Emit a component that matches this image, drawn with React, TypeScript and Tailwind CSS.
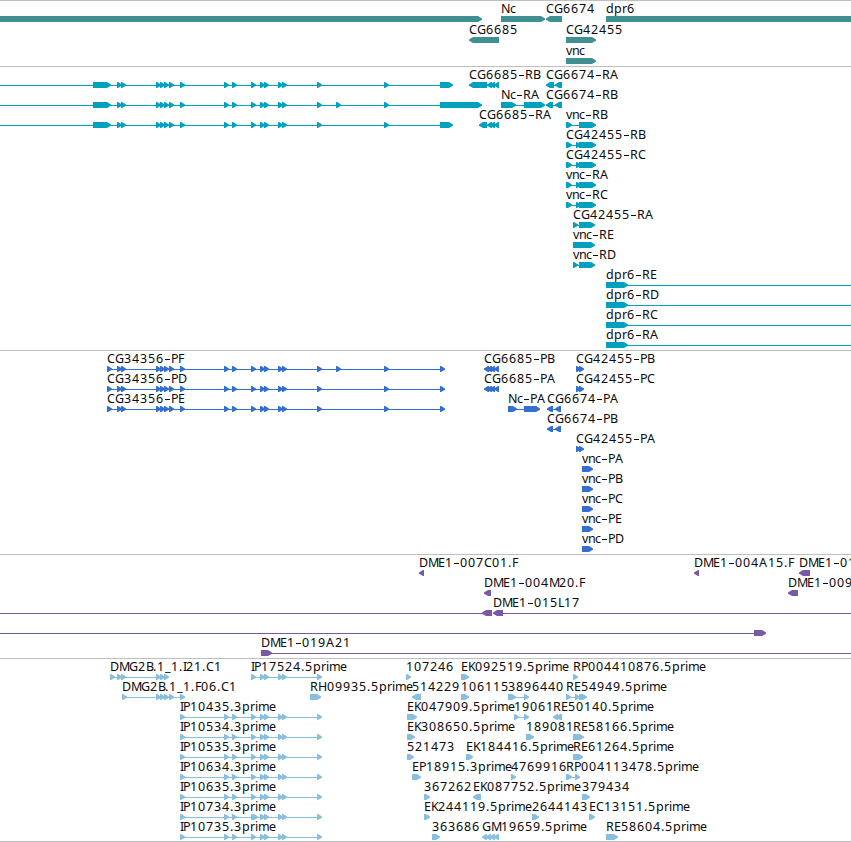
type Exon = [start: number, end: number];

type Feature = {
  x: number;
  label?: string;
  exons: Exon[];
  // intron line, when the feature has more than one block
  line?: [number, number];
  dir?: "left" | "right" | "none";
};

type TrackData = {
  name: string;
  color: string;
  rowHeight: number;
  height: number;
  rows: Feature[][];
};

const VIEW_WIDTH = 851;
const HEAD = 5;

// horizontal advance of each character in a label
const ADVANCE: Record<string, number> = {
  A: 9, B: 7, C: 8, D: 9, E: 7, F: 6, G: 9, H: 9, I: 3, K: 7, L: 6, M: 10,
  N: 9, P: 7, R: 8, c: 6, d: 8, e: 7, i: 3, m: 11, n: 7, p: 8, r: 5, v: 6,
  ".": 4, _: 6, "-": 7,
};

const small = (starts: number[]): Exon[] => starts.map((s) => [s, s + HEAD]);

const gene = (
  x: number,
  label: string | undefined,
  exons: Exon[],
  dir: Feature["dir"] = "right",
): Feature => ({
  x,
  label,
  exons,
  dir,
  line: exons.length > 1 ? [exons[0][0], exons[exons.length - 1][1]] : undefined,
});

const CORE = [117, 121, 156, 160, 164, 169, 180, 224, 232, 251, 260, 264, 278, 282, 317];
const PRIME = [180, 224, 232, 251, 260, 264, 278, 282, 317];

const longTranscript = (extra: number[], lastEnd: number): Feature => ({
  x: 0,
  exons: [[93, 111], ...small([...CORE, ...extra, 384]), [440, lastEnd]],
  line: [0, lastEnd],
});

const vncSplit: Exon[] = [[566, 572], [576, 581], [579, 596]];
const vncShort: Exon[] = [[573, 578], [579, 595]];

const dpr6 = (label: string): Feature => ({
  x: 606,
  label,
  exons: [[606, 628]],
  line: [606, VIEW_WIDTH],
});

const ip = (label: string, starts = PRIME) => gene(180, label, small(starts));

const tracks: TrackData[] = [
  {
    name: "Genes",
    color: "#3f8f93",
    rowHeight: 21,
    height: 66,
    rows: [
      [
        gene(0, undefined, [[0, 482]]),
        gene(501, "Nc", [[501, 545]]),
        gene(546, "CG6674", [[546, 562]], "left"),
        gene(606, "dpr6", [[606, VIEW_WIDTH]], "none"),
      ],
      [gene(469, "CG6685", [[469, 499]], "left"), gene(566, "CG42455", [[566, 596]])],
      [gene(566, "vnc", [[566, 596]])],
    ],
  },
  {
    name: "Transcripts",
    color: "#00a0bf",
    rowHeight: 20,
    height: 284,
    rows: [
      [
        longTranscript([], 453),
        gene(469, "CG6685-RB", [[469, 487], [487, 492], [490, 495], [494, 499]], "left"),
        gene(546, "CG6674-RA", [[546, 554], [555, 562]], "left"),
      ],
      [
        longTranscript([336], 482),
        gene(501, "Nc-RA", [[501, 516], [524, 545]]),
        gene(546, "CG6674-RB", [[546, 553], [555, 562]], "left"),
      ],
      [
        longTranscript([], 453),
        gene(479, "CG6685-RA", [[479, 487], [487, 492], [490, 495], [494, 499]], "left"),
        gene(566, "vnc-RB", [[566, 572], [579, 596]]),
      ],
      [gene(566, "CG42455-RB", vncSplit)],
      [gene(566, "CG42455-RC", vncSplit)],
      [gene(566, "vnc-RA", vncSplit)],
      [gene(566, "vnc-RC", vncSplit)],
      [gene(573, "CG42455-RA", vncShort)],
      [gene(573, "vnc-RE", [[573, 595]])],
      [gene(573, "vnc-RD", vncShort)],
      [dpr6("dpr6-RE")],
      [dpr6("dpr6-RD")],
      [dpr6("dpr6-RC")],
      [dpr6("dpr6-RA")],
    ],
  },
  {
    name: "Proteins",
    color: "#336fcf",
    rowHeight: 20,
    height: 204,
    rows: [
      [
        gene(107, "CG34356-PF", small([107, ...CORE, 336, 384, 440])),
        gene(484, "CG6685-PB", small([484, 487, 490, 494]), "left"),
        gene(576, "CG42455-PB", small([576, 579])),
      ],
      [
        gene(107, "CG34356-PD", small([107, ...CORE, 384, 440])),
        gene(484, "CG6685-PA", small([484, 487, 490, 494]), "left"),
        gene(576, "CG42455-PC", small([576, 579])),
      ],
      [
        gene(107, "CG34356-PE", small([107, ...CORE, 384, 440])),
        gene(508, "Nc-PA", [[508, 517], [524, 540]]),
        gene(547, "CG6674-PA", [[547, 553], [555, 561]], "left"),
      ],
      [gene(547, "CG6674-PB", [[547, 553], [555, 561]], "left")],
      [gene(576, "CG42455-PA", small([576, 579]))],
      [gene(582, "vnc-PA", [[582, 593]])],
      [gene(582, "vnc-PB", [[582, 593]])],
      [gene(582, "vnc-PC", [[582, 593]])],
      [gene(582, "vnc-PE", [[582, 593]])],
      [gene(582, "vnc-PD", [[582, 593]])],
    ],
  },
  {
    name: "BAC ends",
    color: "#7759a7",
    rowHeight: 20,
    height: 104,
    rows: [
      [
        gene(419, "DME1-007C01.F", [[419, 424]], "left"),
        gene(694, "DME1-004A15.F", [[694, 699]], "left"),
        gene(799, "DME1-01", [[799, 810]], "left"),
      ],
      [
        gene(484, "DME1-004M20.F", [[484, 491]], "left"),
        gene(788, "DME1-009", [[788, 798]], "left"),
      ],
      [
        { x: 0, exons: [[482, 492]], line: [0, 492], dir: "left" },
        { x: 493, label: "DME1-015L17", exons: [[493, 503]], line: [493, VIEW_WIDTH], dir: "left" },
      ],
      [{ x: 0, exons: [[754, 766]], line: [0, 766] }],
      [{ x: 261, label: "DME1-019A21", exons: [[261, 272]], line: [261, VIEW_WIDTH] }],
    ],
  },
  {
    name: "ESTs",
    color: "#88bfdf",
    rowHeight: 20,
    height: 183,
    rows: [
      [
        gene(110, "DMG2B.1_1.I21.C1", small([110, 117, 121, 156, 160, 164])),
        gene(251, "IP17524.5prime", small([251, 260, 264, 278, 282, 317])),
        gene(406, "107246", [[406, 411]]),
        gene(461, "EK092519.5prime", [[461, 469]]),
        gene(573, "RP004410876.5prime", [[573, 578]]),
      ],
      [
        gene(122, "DMG2B.1_1.F06.C1", small([122, 156, 160, 164, 169, 180])),
        gene(310, "RH09935.5prime", [[310, 321]]),
        gene(412, "514229", [[412, 421]], "left"),
        gene(461, "106115", [[461, 469]]),
        gene(508, "3896440", [[508, 516], [524, 529]]),
        gene(566, "RE54949.5prime", [[566, 571], [575, 580], [579, 587]]),
      ],
      [
        ip("IP10435.3prime"),
        gene(407, "EK047909.5prime", [[407, 417]]),
        gene(514, "19061", [[514, 519], [524, 529]]),
        gene(553, "RE50140.5prime", [[553, 558], [556, 562]], "left"),
      ],
      [
        ip("IP10534.3prime"),
        gene(407, "EK308650.5prime", [[407, 415]]),
        gene(526, "189081", [[526, 534]]),
        gene(573, "RE58166.5prime", [[573, 584]]),
      ],
      [
        ip("IP10535.3prime"),
        gene(407, "521473", [[407, 414]]),
        gene(466, "EK184416.5prime", [[466, 473]]),
        gene(573, "RE61264.5prime", [[573, 583]]),
      ],
      [
        ip("IP10634.3prime"),
        gene(412, "EP18915.3prime", [[412, 421]]),
        gene(511, "4769916", [[511, 516]]),
        gene(566, "RP004113478.5prime", [[566, 572], [575, 580]]),
      ],
      [
        ip("IP10635.3prime"),
        gene(424, "367262", [[424, 430]]),
        gene(473, "EK087752.5prime", [[473, 481]], "left"),
        gene(582, "379434", [[582, 590]]),
      ],
      [
        ip("IP10734.3prime", [180, 224, 232, 251, 253, 260, 264, 278, 282, 317]),
        gene(424, "EK244119.5prime", [[424, 430]]),
        gene(532, "2644143", [[532, 539]]),
        gene(589, "EC13151.5prime", [[589, 595]]),
      ],
      [
        ip("IP10735.3prime"),
        gene(432, "363686", [[432, 440]]),
        gene(482, "GM19659.5prime", small([482, 486, 490, 494]), "left"),
        gene(606, "RE58604.5prime", [[606, 618]]),
      ],
    ],
  },
];

// a block with a blunt arrow head on the side it is read towards
function exonPoints([a, b]: Exon, y: number, dir: Feature["dir"]) {
  const top = y + 16;
  const bottom = y + 22;
  const tipTop = y + 18.4;
  const tipBottom = y + 19.8;
  if (dir === "none") return `${a},${top} ${b},${top} ${b},${bottom} ${a},${bottom}`;
  if (dir === "left") {
    const neck = a + HEAD - 1;
    return `${b},${top} ${neck},${top} ${a},${tipTop} ${a},${tipBottom} ${neck},${bottom} ${b},${bottom}`;
  }
  const neck = b - HEAD + 1;
  return `${a},${top} ${neck},${top} ${b},${tipTop} ${b},${tipBottom} ${neck},${bottom} ${a},${bottom}`;
}

function charPositions(x: number, label: string) {
  let pos = x;
  return [...label].map((ch) => {
    const at = pos;
    pos += ADVANCE[ch] ?? 8;
    return ch === "-" ? at + 1.2 : at;
  });
}

function Label({ x, y, text }: { x: number; y: number; text: string }) {
  const positions = charPositions(x, text);
  const dash = text.indexOf("-");
  return (
    <g fill="#0a0a0a">
      <text x={positions.join(" ")} y={y}>
        {text}
      </text>
      {/* the font's hyphen is short, so stretch it */}
      {dash >= 0 && <rect x={positions[dash] - 0.2} y={y - 4} width={5} height={1} />}
    </g>
  );
}

function FeatureGlyph({ feature, y, color }: { feature: Feature; y: number; color: string }) {
  const { x, label, exons, line, dir } = feature;
  return (
    <g fill={color}>
      {line && (
        <rect
          x={line[0]}
          y={y + 19}
          width={line[1] - line[0] - (line[1] === VIEW_WIDTH ? 0 : 2)}
          height={1}
        />
      )}
      {exons.map((exon, i) => (
        <polygon key={i} points={exonPoints(exon, y, dir)} />
      ))}
      {label && <Label x={x} y={y + 13} text={label} />}
    </g>
  );
}

function Track({ track }: { track: TrackData }) {
  return (
    <section className="w-full shrink-0 overflow-hidden" aria-label={track.name}>
      <div className="h-px bg-[#bfbfbf]" />
      <svg
        className="block font-['Noto_Sans','Open_Sans',sans-serif] text-[12.5px]"
        width={VIEW_WIDTH}
        height={track.height - 1}
        viewBox={`0 1 ${VIEW_WIDTH} ${track.height - 1}`}
      >
        {track.rows.map((row, r) =>
          row.map((feature, i) => (
            <FeatureGlyph
              key={`${r}-${i}`}
              feature={feature}
              y={r * track.rowHeight}
              color={track.color}
            />
          )),
        )}
      </svg>
    </section>
  );
}

export default function App() {
  return (
    <main className="flex h-[842px] w-[851px] flex-col overflow-hidden bg-white">
      {tracks.map((track) => (
        <Track key={track.name} track={track} />
      ))}
      <div className="h-px bg-[#bfbfbf]" />
    </main>
  );
}
